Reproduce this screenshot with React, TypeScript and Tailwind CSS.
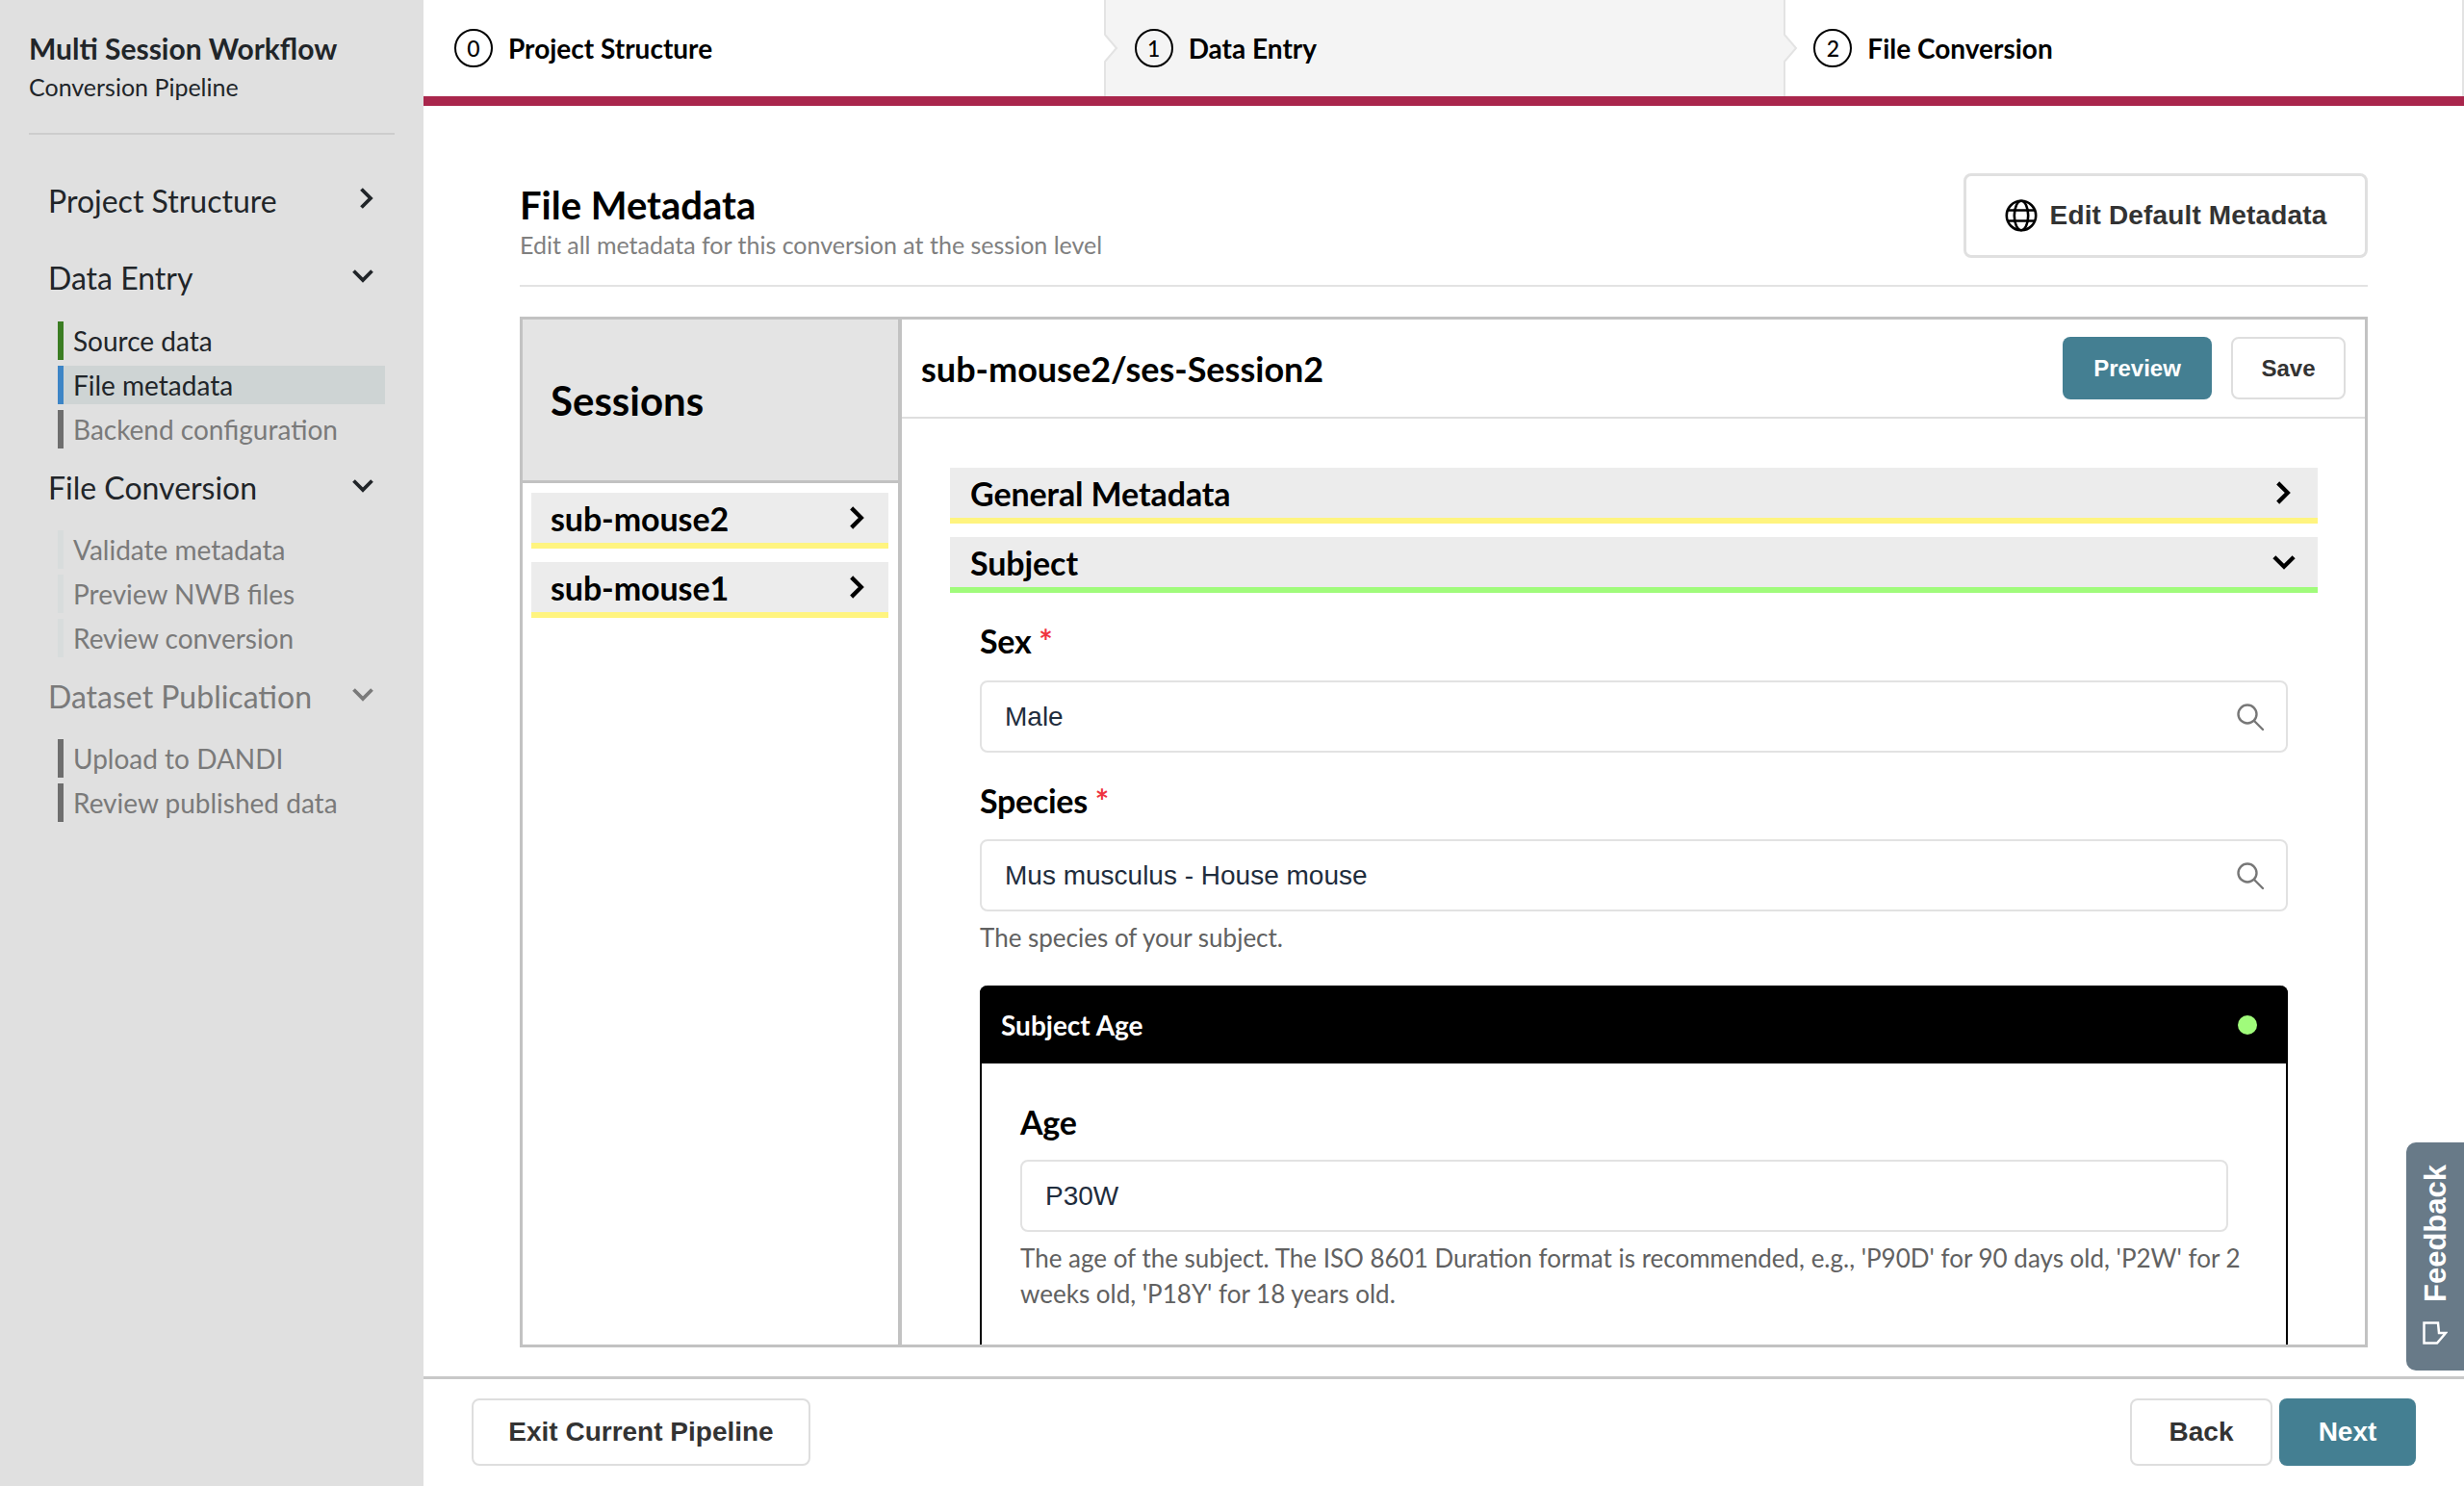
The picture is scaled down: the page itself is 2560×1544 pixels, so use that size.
function Chevron({ dir, big, className }: { dir: "right" | "down"; big?: boolean; className: string }) {
  const long = big ? 26 : 24
  const short = big ? 16 : 15
  const weight = big ? "4" : "3.8"
  if (dir === "right") {
    return (
      <svg width={short} height={long} viewBox="0 0 15 24" fill="none" stroke="currentColor" strokeWidth={weight} className={`shrink-0 ${className}`}>
        <path d="M2.5 2.5 L12 12 L2.5 21.5" />
      </svg>
    )
  }
  return (
    <svg width={long} height={short} viewBox="0 0 24 15" fill="none" stroke="currentColor" strokeWidth={weight} className={`shrink-0 ${className}`}>
      <path d="M2.5 2.5 L12 12 L21.5 2.5" />
    </svg>
  )
}

function StepArrow({ fill }: { fill: string }) {
  return (
    <svg className="absolute -left-[2px] top-[36px]" width="16" height="28" viewBox="0 0 16 28" fill="none">
      <path d="M0 0 L12 14 L0 28 Z" fill={fill} />
      <path d="M1 0 L13 14 L1 28" stroke="#e3e3e3" strokeWidth="2" />
    </svg>
  )
}

function Step({ n, label, className, arrow }: { n: number; label: string; className: string; arrow?: string }) {
  return (
    <div className={`relative flex items-center gap-[16px] ${className}`}>
      <div className="w-[40px] h-[40px] rounded-full border-2 border-black flex items-center justify-center text-[23px] font-medium text-black shrink-0">{n}</div>
      <span className="text-[28px] font-bold text-black">{label}</span>
      {arrow && <StepArrow fill={arrow} />}
    </div>
  )
}

function SideItem({ label, bar, text, active }: { label: string; bar: string; text: string; active?: boolean }) {
  return (
    <div className={`flex h-[40px] items-center ${active ? "bg-[#ced4d4]" : ""}`}>
      <div className={`w-[6px] h-full shrink-0 ${bar}`} />
      <span className={`pl-[10px] text-[28px] ${text}`}>{label}</span>
    </div>
  )
}

function SideHead({ label, open, muted, className }: { label: string; open?: boolean; muted?: boolean; className: string }) {
  return (
    <div className={`flex items-center h-[48px] justify-between w-[339px] ${className}`}>
      <span className={`pt-[3px] text-[32px] ${muted ? "text-[#7a7a7a]" : "text-[#212529]"}`}>{label}</span>
      {open ? (
        <Chevron dir="down" className={muted ? "text-[#7a7a7a] -mt-[2px]" : "text-[#212529] -mt-[2px]"} />
      ) : (
        <Chevron dir="right" className="text-[#212529] mr-[1px] -mt-[2px]" />
      )}
    </div>
  )
}

function Sidebar() {
  return (
    <aside className="w-[440px] shrink-0 h-full bg-[#e0e0e0] pt-[30px]">
      <div className="px-[30px]">
        <div className="text-[30px] leading-[40px] font-bold text-[#212529]">Multi Session Workflow</div>
        <div className="text-[25px] leading-[40px] text-[#212529]">Conversion Pipeline</div>
        <div className="h-[2px] bg-[#cdcdcd] mt-[28px]" />
      </div>
      <div className="pl-[50px]">
        <SideHead label="Project Structure" className="mt-[43px]" />
        <SideHead label="Data Entry" open className="mt-[32px]" />
      </div>
      <div className="ml-[60px] w-[340px] mt-[23px] flex flex-col gap-[6px]">
        <SideItem label="Source data" bar="bg-[#3b7d23]" text="text-[#212529]" />
        <SideItem label="File metadata" bar="bg-[#3d85c6]" text="text-[#212529]" active />
        <SideItem label="Backend configuration" bar="bg-[#6e6e6e]" text="text-[#7a7a7a]" />
      </div>
      <div className="pl-[50px]">
        <SideHead label="File Conversion" open className="mt-[15px]" />
      </div>
      <div className="ml-[60px] w-[340px] mt-[22px] flex flex-col gap-[6px]">
        <SideItem label="Validate metadata" bar="bg-[#d8dcdc]" text="text-[#7a7a7a]" />
        <SideItem label="Preview NWB files" bar="bg-[#d8dcdc]" text="text-[#7a7a7a]" />
        <SideItem label="Review conversion" bar="bg-[#d8dcdc]" text="text-[#7a7a7a]" />
      </div>
      <div className="pl-[50px]">
        <SideHead label="Dataset Publication" open muted className="mt-[15px]" />
      </div>
      <div className="ml-[60px] w-[340px] mt-[22px] flex flex-col gap-[6px]">
        <SideItem label="Upload to DANDI" bar="bg-[#6e6e6e]" text="text-[#7a7a7a]" />
        <SideItem label="Review published data" bar="bg-[#6e6e6e]" text="text-[#7a7a7a]" />
      </div>
    </aside>
  )
}

function Bar({ label, color, open, inset }: { label: string; color: string; open?: boolean; inset: string }) {
  return (
    <div className={`flex items-center justify-between h-[58px] bg-[#ececec] border-b-[6px] ${color} ${inset}`}>
      <span className="text-[34px] font-bold text-black tracking-[-0.1px]">{label}</span>
      <Chevron dir={open ? "down" : "right"} big className={open ? "text-black -mr-[6px]" : "text-black"} />
    </div>
  )
}

function SearchIcon() {
  return (
    <svg width="34" height="34" viewBox="0 0 34 34" fill="none" stroke="#777777" strokeWidth="2.4" className="shrink-0">
      <circle cx="14" cy="14" r="9.5" />
      <path d="M21 21 L30 30" strokeLinecap="round" />
    </svg>
  )
}

function SearchInput({ value }: { value: string }) {
  return (
    <div className="flex items-center justify-between h-[75px] border-2 border-[#e2e2e2] rounded-[8px] pl-[24px] pr-[20px]">
      <span className="font-['Liberation_Sans',sans-serif] text-[28px] text-[#1f2d3d]">{value}</span>
      <SearchIcon />
    </div>
  )
}

function Label({ text, required, className }: { text: string; required?: boolean; className: string }) {
  return (
    <div className={`text-[34px] leading-[44px] font-bold text-black tracking-[-0.3px] ${className}`}>
      {text}
      {required && <span className="text-[#ef3340] ml-[8px]">*</span>}
    </div>
  )
}

const btn = "font-['Liberation_Sans',sans-serif] font-bold rounded-[8px] flex items-center justify-center"

export default function App() {
  return (
    <div className="relative flex w-full h-screen overflow-hidden bg-white font-['Lato',sans-serif]">
      <Sidebar />

      <main className="flex-1 min-w-0 flex flex-col h-full">
        {/* Steps */}
        <div className="grid grid-cols-3 h-[110px] shrink-0 border-b-[10px] border-[#a9264c]">
          <Step n={0} label="Project Structure" className="pl-[32px]" />
          <Step n={1} label="Data Entry" className="bg-[#f4f4f4] border-l-2 border-[#e3e3e3] pl-[30px]" arrow="#ffffff" />
          <Step n={2} label="File Conversion" className="border-x-2 border-[#e3e3e3] pl-[29px]" arrow="#f4f4f4" />
        </div>

        {/* Page */}
        <div className="flex-1 min-h-0 px-[100px] pt-[70px] flex flex-col">
          <div className="flex justify-between shrink-0 h-[118px] border-b-2 border-[#e3e3e3]">
            <div>
              <h1 className="text-[40px] leading-[48px] mt-[9px] font-bold text-black">File Metadata</h1>
              <p className="text-[25px] leading-[36px] -mt-[1px] text-[#808080]">Edit all metadata for this conversion at the session level</p>
            </div>
            <button className={`${btn} w-[420px] h-[88px] gap-[13px] border-[3px] border-[#e0e0e0] text-[28px] tracking-[0.15px] text-[#333333]`}>
              <svg width="34" height="34" viewBox="0 0 34 34" fill="none" stroke="#000000" strokeWidth="2.6" className="shrink-0">
                <circle cx="17" cy="17" r="15.2" />
                <ellipse cx="17" cy="17" rx="7.2" ry="15.2" />
                <path d="M3 11.5 H31 M3 22.5 H31" />
              </svg>
              Edit Default Metadata
            </button>
          </div>

          <div className="mt-[31px] h-[1071px] shrink-0 flex border-[3px] border-[#c2c2c2] overflow-hidden">
            {/* Sessions */}
            <div className="w-[394px] shrink-0 border-r-4 border-[#c2c2c2]">
              <div className="h-[170px] bg-[#e4e4e4] border-b-[3px] border-[#c2c2c2] flex items-center pl-[29px] pt-[2px]">
                <span className="text-[42px] font-bold text-black">Sessions</span>
              </div>
              <div className="pt-[10px] flex flex-col gap-[14px]">
                <Bar label="sub-mouse2" color="border-[#fff47f]" inset="ml-[9px] mr-[10px] pl-[20px] pr-[25px]" />
                <Bar label="sub-mouse1" color="border-[#fff47f]" inset="ml-[9px] mr-[10px] pl-[20px] pr-[25px]" />
              </div>
            </div>

            {/* Session form */}
            <div className="flex-1 min-w-0">
              <div className="flex items-center justify-between h-[103px] border-b-2 border-[#dedede] pl-[20px] pr-[20px]">
                <span className="text-[36px] font-bold text-black">sub-mouse2/ses-Session2</span>
                <div className="flex gap-[20px]">
                  <button className={`${btn} w-[155px] h-[65px] bg-[#447f92] text-[24px] text-white`}>Preview</button>
                  <button className={`${btn} w-[119px] h-[65px] border-2 border-[#dedede] text-[24px] text-[#333333]`}>Save</button>
                </div>
              </div>

              <div className="pl-[50px] pr-[49px] pt-[51px]">
                <Bar label="General Metadata" color="border-[#fff47f]" inset="pl-[21px] pr-[28px]" />
                <div className="h-[14px]" />
                <Bar label="Subject" color="border-[#a0fb7b]" open inset="pl-[21px] pr-[28px]" />
                <div className="px-[31px]">
                  <Label text="Sex" required className="mt-[28px] mb-[19px]" />
                  <SearchInput value="Male" />
                  <Label text="Species" required className="mt-[28px] mb-[18px]" />
                  <SearchInput value="Mus musculus - House mouse" />
                  <p className="text-[26px] leading-[36px] text-[#616161] mt-[9px]">The species of your subject.</p>

                  <div className="mt-[32px] rounded-t-[8px] border-x-2 border-black">
                    <div className="-mx-[2px] h-[81px] bg-black rounded-t-[8px] flex items-center justify-between pl-[22px] pr-[32px]">
                      <span className="text-[28px] font-bold text-white">Subject Age</span>
                      <div className="w-[20px] h-[20px] rounded-full bg-[#a0fb7b]" />
                    </div>
                    <div className="pl-[40px] pr-[30px] pb-[40px]">
                      <Label text="Age" className="mt-[39px] mb-[17px]" />
                      <div className="flex items-center h-[75px] w-[1255px] border-2 border-[#e2e2e2] rounded-[8px] pl-[24px]">
                        <span className="font-['Liberation_Sans',sans-serif] text-[28px] text-[#1f2d3d]">P30W</span>
                      </div>
                      <p className="text-[26px] leading-[37px] text-[#616161] mt-[9px]">
                        The age of the subject. The ISO 8601 Duration format is recommended, e.g., 'P90D' for 90 days old, 'P2W' for 2 weeks old, 'P18Y' for 18 years old.
                      </p>
                    </div>
                  </div>
                </div>
              </div>
            </div>
          </div>
        </div>

        {/* Footer */}
        <div className="shrink-0 h-[114px] border-t-[3px] border-[#c8c8c8] flex items-start justify-between pl-[50px] pr-[50px] pt-[20px]">
          <button className={`${btn} w-[352px] h-[70px] border-2 border-[#dedede] text-[28px] text-[#333333]`}>Exit Current Pipeline</button>
          <div className="flex gap-[7px]">
            <button className={`${btn} w-[148px] h-[70px] border-2 border-[#dedede] text-[28px] text-[#333333]`}>Back</button>
            <button className={`${btn} w-[142px] h-[70px] bg-[#447f92] text-[28px] text-white`}>Next</button>
          </div>
        </div>
      </main>

      {/* Feedback tab */}
      <div className="absolute right-0 top-[1187px] w-[60px] h-[237px] bg-[#687a88] rounded-l-[10px] flex flex-col items-center justify-end pb-[27px] gap-[20px]">
        <span className="font-['Liberation_Sans',sans-serif] font-bold text-[31px] text-white [writing-mode:vertical-rl] rotate-180 leading-none">Feedback</span>
        <svg width="26" height="24" viewBox="0 0 26 24" fill="none" stroke="#ffffff" strokeWidth="2.5" className="shrink-0">
          <path d="M1.5 1.5 H16 L17 12 H24 L15 22.5 H1.5 Z" />
        </svg>
      </div>
    </div>
  )
}
